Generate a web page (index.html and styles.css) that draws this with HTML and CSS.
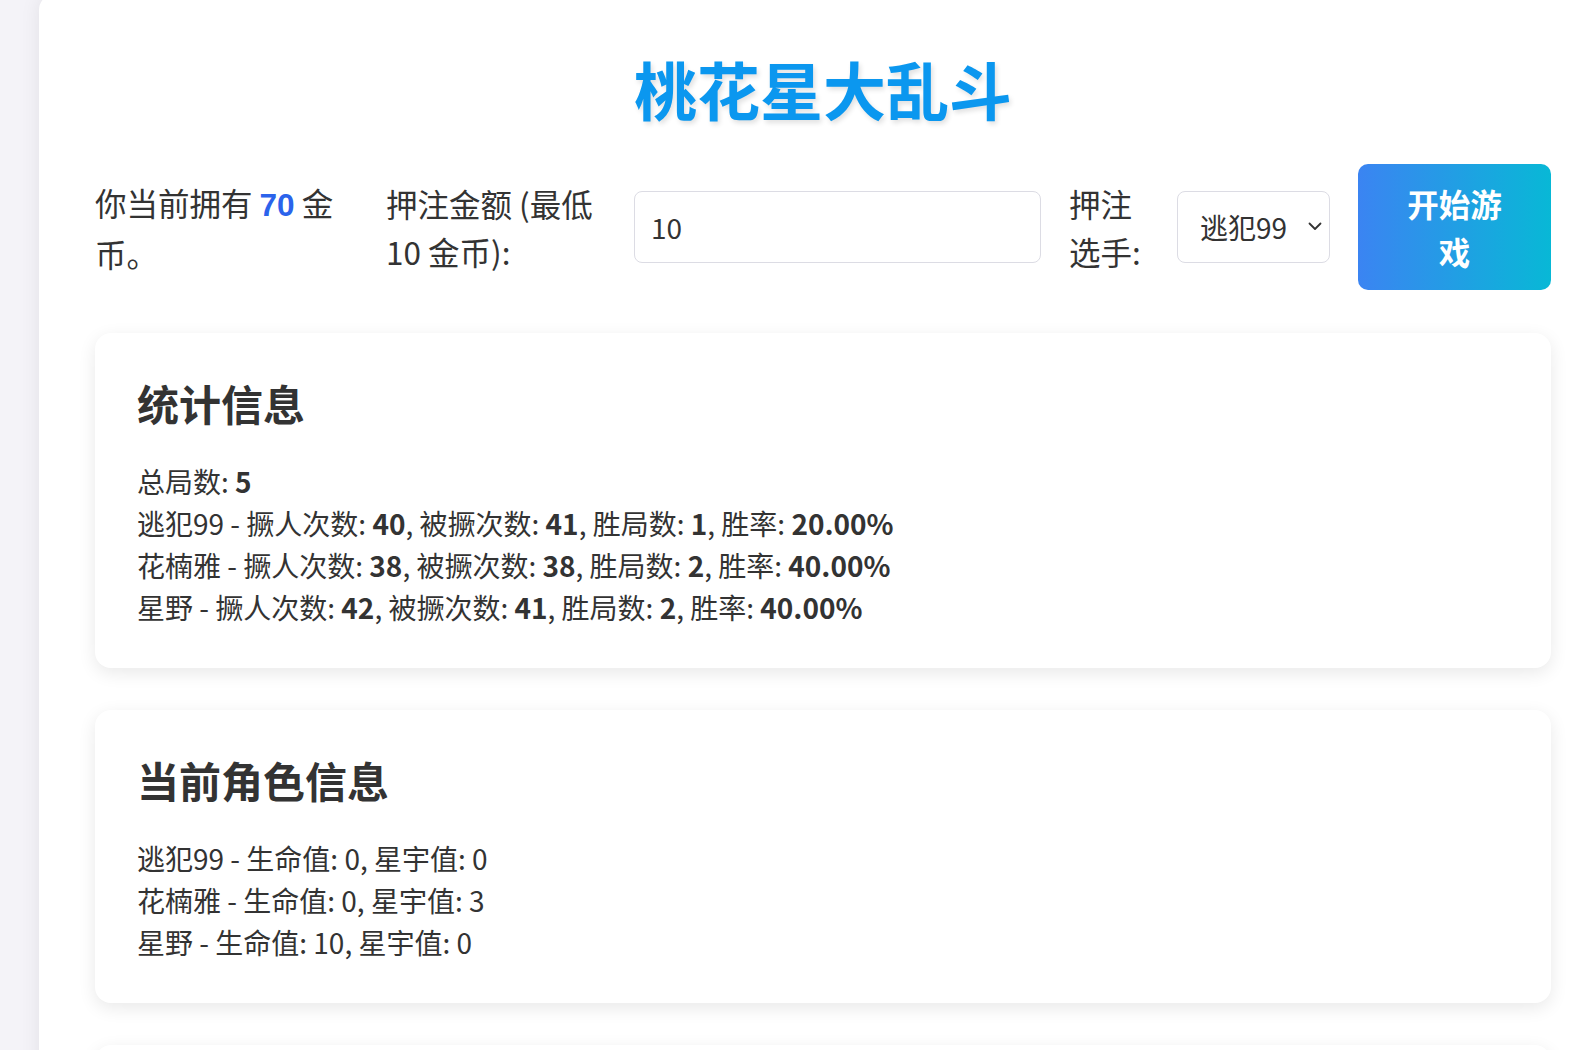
FILE: index.html
```html
<!DOCTYPE html>
<html>
    <head>
        <meta charset="utf-8">
        <title>桃花星大乱斗</title>
        <link rel="stylesheet" href="styles.css">
    </head>
    <body>
        <div class="container">
            <h1 class="title">桃花星大乱斗</h1>

            <div class="controls">
                <p class="coins">你当前拥有 <span class="coin-num">70</span> 金币。</p>
                <label class="bet-label" for="bet">押注金额 (最低 10 金币):</label>
                <input class="bet-input" id="bet" type="text" value="10">
                <label class="pick-label" for="pick">押注选手:</label>
                <div class="select-wrap">
                    <select class="pick-select" id="pick">
                        <option>逃犯99</option>
                        <option>花楠雅</option>
                        <option>星野</option>
                    </select>
                    <svg class="chevron" width="18" height="18" viewBox="0 0 18 18">
                        <path d="M3.5 6.5 L9 12 L14.5 6.5" fill="none" stroke="#333" stroke-width="1.8" stroke-linecap="round" stroke-linejoin="round"/>
                    </svg>
                </div>
                <button class="start-btn">开始游戏</button>
            </div>

            <div class="card">
                <h2>统计信息</h2>
                <div class="lines">
                    <div>总局数: <b>5</b></div>
                    <div>逃犯99 - 撅人次数: <b>40</b>, 被撅次数: <b>41</b>, 胜局数: <b>1</b>, 胜率: <b>20.00%</b></div>
                    <div>花楠雅 - 撅人次数: <b>38</b>, 被撅次数: <b>38</b>, 胜局数: <b>2</b>, 胜率: <b>40.00%</b></div>
                    <div>星野 - 撅人次数: <b>42</b>, 被撅次数: <b>41</b>, 胜局数: <b>2</b>, 胜率: <b>40.00%</b></div>
                </div>
            </div>

            <div class="card">
                <h2>当前角色信息</h2>
                <div class="lines">
                    <div>逃犯99 - 生命值: 0, 星宇值: 0</div>
                    <div>花楠雅 - 生命值: 0, 星宇值: 3</div>
                    <div>星野 - 生命值: 10, 星宇值: 0</div>
                </div>
            </div>

            <div class="card card-last"></div>
        </div>
    </body>
</html>
```

FILE: styles.css
```css
* {
    margin: 0;
    padding: 0;
    box-sizing: border-box;
}

html, body {
    overflow: hidden;
}

body {
    padding-left: 39px;
    background: #f4f3f8;
    color: #333;
    font-family: 'Noto Sans CJK SC', 'Noto Sans', sans-serif;
    font-size: 28px;
    line-height: 42px;
}

.container {
    width: 1568px;
    margin-top: -6px;
    padding: 55px 56px 60px;
    background: white;
    border-radius: 16px;
    box-shadow: 0 0 20px rgba(0,0,0,0.08);
}

.title {
    text-align: center;
    font-size: 63px;
    line-height: 77px;
    font-weight: 700;
    color: #0b97ef;
    text-shadow: 2px 3px 5px rgba(0,0,0,0.12);
    margin-bottom: 38px;
}

.controls {
    display: flex;
    align-items: center;
    gap: 28px;
    font-size: 31.5px;
    line-height: 48px;
}

.coins {
    flex: none;
    width: 263px;
}

.coin-num {
    color: #2b63eb;
    font-weight: 700;
    font-family: 'Liberation Sans', Arial, sans-serif;
}

.bet-label {
    flex: none;
    width: 220px;
}

.pick-label {
    flex: none;
    width: 80px;
}

.bet-input {
    flex: none;
    width: 407px;
    height: 72px;
    padding: 0 16px;
    border: 1px solid #dcdce4;
    border-radius: 8px;
    font-family: inherit;
    font-size: 28px;
    color: #333;
    background: white;
}

.select-wrap {
    position: relative;
    flex: none;
    width: 153px;
    height: 72px;
}

.pick-select {
    width: 100%;
    height: 100%;
    padding: 0 0 0 22px;
    appearance: none;
    -webkit-appearance: none;
    border: 1px solid #dcdce4;
    border-radius: 8px;
    background: white;
    font-family: inherit;
    font-size: 28px;
    color: #333;
}

.chevron {
    position: absolute;
    right: 6px;
    top: 26px;
    pointer-events: none;
}

.start-btn {
    flex: none;
    width: 193px;
    height: 126px;
    padding: 0 40px;
    border: none;
    border-radius: 10px;
    background: linear-gradient(90deg, #3b84f2 0%, #08b8d6 100%);
    color: white;
    font-family: inherit;
    font-size: 31.5px;
    line-height: 48px;
    font-weight: 700;
}

.card {
    margin-top: 42px;
    padding: 40px 42px;
    background: white;
    border-radius: 16px;
    box-shadow: 0 5px 18px rgba(0,0,0,0.09);
}

.controls + .card {
    margin-top: 43px;
}

.card h2 {
    font-size: 42px;
    line-height: 60px;
    font-weight: 700;
    margin-bottom: 27px;
}

.lines b {
    font-weight: 700;
}

.card-last {
    height: 200px;
}
```
